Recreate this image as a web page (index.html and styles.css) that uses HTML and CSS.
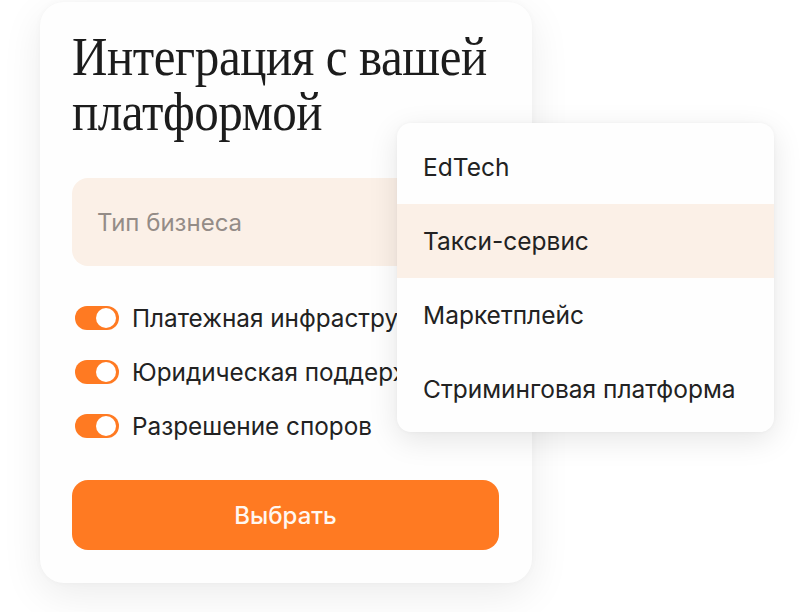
FILE: index.html
```html
<!DOCTYPE html>
<html lang="ru">
<head>
<meta charset="utf-8">
<link rel="stylesheet" href="styles.css">
</head>
<body>
<div class="stage">
  <div class="card">
    <h1 class="title">Интеграция с вашей<br>платформой</h1>
    <div class="field">Тип бизнеса</div>
    <ul class="options">
      <li class="option"><span class="toggle"><span class="knob"></span></span><span class="label">Платежная инфраструктура</span></li>
      <li class="option"><span class="toggle"><span class="knob"></span></span><span class="label">Юридическая поддержка</span></li>
      <li class="option"><span class="toggle"><span class="knob"></span></span><span class="label">Разрешение споров</span></li>
    </ul>
    <button class="btn">Выбрать</button>
  </div>
  <ul class="menu">
    <li class="menu-item">EdTech</li>
    <li class="menu-item active">Такси-сервис</li>
    <li class="menu-item">Маркетплейс</li>
    <li class="menu-item">Стриминговая платформа</li>
  </ul>
</div>
</body>
</html>
```

FILE: styles.css
```css
* { box-sizing: border-box; }
html, body { margin: 0; padding: 0; background: #ffffff; }
body { font-family: "Inter", "Liberation Sans", sans-serif; color: #222; }

.stage {
  position: relative;
  width: 800px;
  height: 612px;
  padding: 2px 0 0 40px;
}

.card {
  width: 492px;
  height: 581px;
  background: #fefefe;
  border-radius: 24px;
  box-shadow: 0 12px 40px rgba(0, 0, 0, 0.08), 0 0 6px rgba(0, 0, 0, 0.03);
  padding: 27px 32px 33px;
  display: flex;
  flex-direction: column;
  overflow: hidden;
}

.title {
  margin: 0;
  font-family: "Liberation Serif", "DejaVu Serif", serif;
  font-weight: 400;
  font-size: 55px;
  line-height: 55px;
  letter-spacing: -0.5px;
  color: #1c1c1c;
  width: 520px;
  flex: none;
  white-space: nowrap;
  transform: scaleX(0.892);
  transform-origin: left top;
}

.field {
  margin-top: 39px;
  height: 88px;
  width: 427px;
  flex: none;
  background: #fbf0e7;
  border-radius: 16px;
  padding-left: 25px;
  display: flex;
  align-items: center;
  font-size: 24px;
  color: #948c87;
}

.options {
  list-style: none;
  margin: 40px 0 0;
  padding: 0;
  display: flex;
  flex-direction: column;
  gap: 30px;
}

.option {
  display: flex;
  align-items: center;
  height: 24px;
  white-space: nowrap;
}

.toggle {
  width: 44px;
  height: 24px;
  border-radius: 12px;
  background: #ff7a22;
  margin-left: 3px;
  display: flex;
  align-items: center;
  justify-content: flex-end;
  padding-right: 3px;
  flex: none;
}

.knob {
  width: 20px;
  height: 20px;
  border-radius: 50%;
  background: #ffffff;
}

.label {
  margin-left: 13px;
  font-size: 24.3px;
  color: #222;
}

.btn {
  margin-top: 42px;
  width: 427px;
  height: 70px;
  border: none;
  border-radius: 16px;
  background: #ff7a22;
  color: #fff7f0;
  font-family: "Inter", "Liberation Sans", sans-serif;
  font-size: 24px;
  font-weight: 500;
}

.menu {
  position: absolute;
  left: 397px;
  top: 123px;
  width: 377px;
  height: 309px;
  margin: 0;
  padding: 7px 0 5px;
  list-style: none;
  background: #fefefe;
  border-radius: 14px;
  box-shadow: 0 8px 30px rgba(0, 0, 0, 0.10), 0 0 4px rgba(0, 0, 0, 0.04);
}

.menu-item {
  height: 74px;
  display: flex;
  align-items: center;
  padding-left: 26px;
  font-size: 24.5px;
  color: #222;
}

.menu-item.active {
  background: #fbf0e7;
}
```
